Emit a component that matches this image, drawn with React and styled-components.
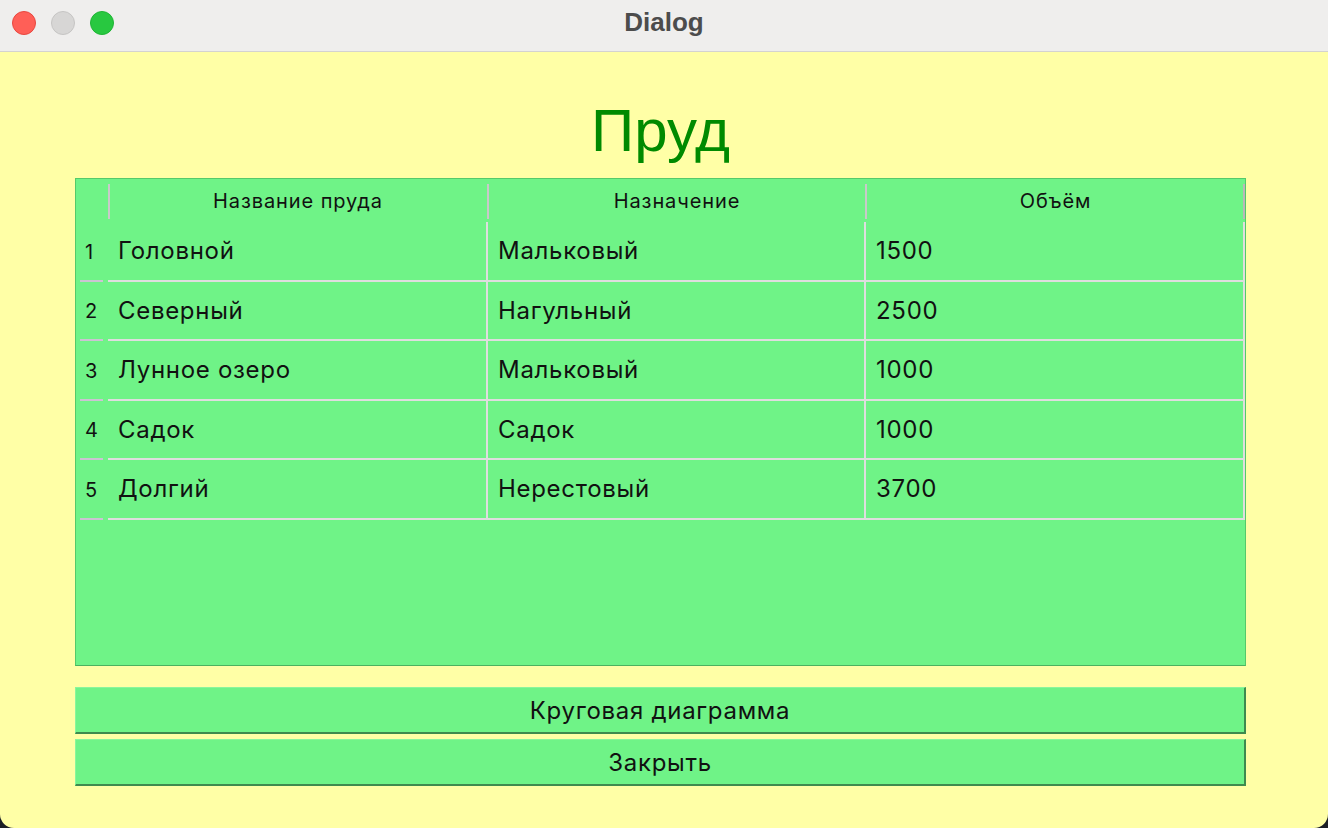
import React from 'react';
import styled, { createGlobalStyle } from 'styled-components';

const GlobalStyle = createGlobalStyle`
  html, body {
    margin: 0;
    padding: 0;
    background: #1c1f26;
  }
  body {
    font-family: Inter, "Liberation Sans", Arial, sans-serif;
  }
`;

const green = '#6ff387';
const yellow = '#ffffa6';

const Window = styled.div`
  width: 1328px;
  height: 828px;
  display: flex;
  flex-direction: column;
  border-radius: 0 0 14px 14px;
  overflow: hidden;
  background: ${yellow};
`;

const TitleBar = styled.div`
  height: 52px;
  flex: none;
  display: flex;
  align-items: center;
  padding-bottom: 6px;
  position: relative;
  background: #efeeed;
  border-bottom: 1px solid #d4d3d0;
  box-sizing: border-box;
`;

const Lights = styled.div`
  display: flex;
  gap: 15px;
  padding-left: 12px;
`;

const Light = styled.span`
  width: 24px;
  height: 24px;
  border-radius: 50%;
  box-sizing: border-box;
  background: ${p => p.color};
  border: 1px solid ${p => p.edge};
`;

const Caption = styled.div`
  position: absolute;
  left: 0;
  right: 0;
  top: 7px;
  text-align: center;
  font-family: "Liberation Sans", Arial, sans-serif;
  font-weight: bold;
  font-size: 26px;
  color: #4c4c4c;
  pointer-events: none;
`;

const Body = styled.div`
  flex: 1;
  padding: 40px 82px 0 75px;
  display: flex;
  flex-direction: column;
`;

const Heading = styled.h1`
  margin: 0;
  height: 86px;
  text-align: center;
  font-family: "Liberation Sans", Arial, sans-serif;
  font-weight: normal;
  font-size: 60px;
  line-height: 78px;
  color: #008a00;
`;

const Grid = styled.div`
  height: 488px;
  box-sizing: border-box;
  background: ${green};
  border: 1px solid #55c96a;
  border-bottom-color: #4bb25f;
  display: flex;
  flex-direction: column;
`;

const Row = styled.div`
  display: grid;
  grid-template-columns: 32px 380px 378px 379px;
  height: ${p => p.h}px;
`;

const HeadCell = styled.div`
  position: relative;
  display: flex;
  align-items: center;
  justify-content: center;
  font-size: 20px;
  letter-spacing: 0.9px;
  color: #111;
  &::before {
    content: '';
    position: absolute;
    left: ${p => (p.second ? 0 : -1)}px;
    top: 5px;
    bottom: 3px;
    width: 2px;
    background: ${p => (p.first ? 'transparent' : '#c9c9c9')};
  }
  &:last-child::after {
    content: '';
    position: absolute;
    right: 0;
    top: 5px;
    bottom: 3px;
    width: 2px;
    background: #b9b9b9;
  }
`;

const NumCell = styled.div`
  position: relative;
  display: flex;
  align-items: center;
  padding-left: 9px;
  font-size: 20px;
  color: #111;
  &::after {
    content: '';
    position: absolute;
    left: 4px;
    right: 5px;
    bottom: 0;
    height: 2px;
    background: #cbc4d2;
  }
`;

const Cell = styled.div`
  display: flex;
  align-items: center;
  padding-left: 10px;
  font-size: 24px;
  letter-spacing: 0.7px;
  color: #111;
  border-right: 2px solid #dedede;
  border-bottom: 2px solid #dedede;
`;

const ActionButton = styled.button`
  display: block;
  width: 1171px;
  height: 47px;
  margin-top: ${p => p.gap}px;
  padding: 0;
  background: ${green};
  border: 1px solid #8af59c;
  border-right: 2px solid #3f8a4e;
  border-bottom: 2px solid #3f8a4e;
  font-family: Inter, "Liberation Sans", Arial, sans-serif;
  font-size: 24px;
  letter-spacing: 0.7px;
  color: #111;
  cursor: pointer;
`;

const ponds = [
  ['Головной', 'Мальковый', '1500'],
  ['Северный', 'Нагульный', '2500'],
  ['Лунное озеро', 'Мальковый', '1000'],
  ['Садок', 'Садок', '1000'],
  ['Долгий', 'Нерестовый', '3700'],
];

export default function App() {
  return (
    <>
      <GlobalStyle />
      <Window>
        <TitleBar>
          <Lights>
            <Light color="#ff5f57" edge="#e8473f" />
            <Light color="#d7d6d5" edge="#c6c5c4" />
            <Light color="#28c840" edge="#1fb535" />
          </Lights>
          <Caption>Dialog</Caption>
        </TitleBar>
        <Body>
          <Heading>Пруд</Heading>
          <Grid>
            <Row h={43}>
              <HeadCell first />
              <HeadCell second>Название пруда</HeadCell>
              <HeadCell>Назначение</HeadCell>
              <HeadCell>Объём</HeadCell>
            </Row>
            {ponds.map((p, i) => (
              <Row key={i} h={59.5}>
                <NumCell>{i + 1}</NumCell>
                {p.map((v, j) => (
                  <Cell key={j}>{v}</Cell>
                ))}
              </Row>
            ))}
          </Grid>
          <ActionButton gap={21}>Круговая диаграмма</ActionButton>
          <ActionButton gap={5}>Закрыть</ActionButton>
        </Body>
      </Window>
    </>
  );
}
